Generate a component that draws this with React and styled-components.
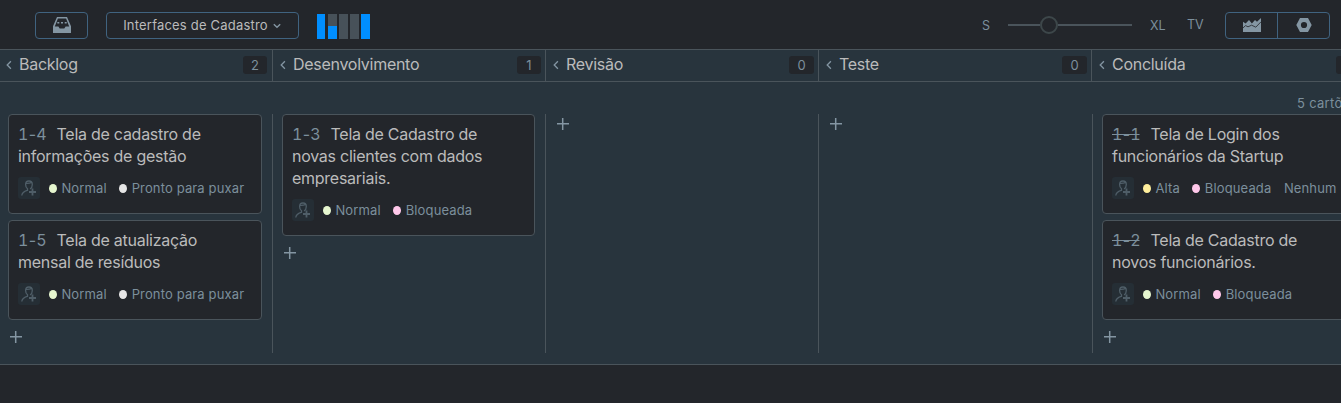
import React from 'react';
import styled, { createGlobalStyle } from 'styled-components';

const c = {
  dark: '#23262b', board: '#28343d', line: '#4a545b', blue: '#406380',
  text: '#bbbbbb', muted: '#7c8f9c', icon: '#8496a3', accent: '#008eff', idle: '#475159',
};

const Global = createGlobalStyle`
  * { box-sizing: border-box; }
  body { margin: 0; background: ${c.dark}; color: ${c.text}; font-family: Inter, "Liberation Sans", sans-serif; font-size: 13px; overflow: hidden; }
  svg { display: block; flex: none; }
`;

const Page = styled.main`
  width: 100vw; height: 100vh; overflow: hidden; background: ${c.dark};
`;
const Toolbar = styled.header`
  height: 49px; display: flex; align-items: flex-start; padding: 12px 11px 0 35px;
`;
const Button = styled.button`
  height: 27px; width: ${p => p.$w}px; display: flex; align-items: center; justify-content: center;
  gap: 5px; padding: 0 1px 0 0; background: none; border: 1px solid ${c.blue}; border-radius: 4px;
  color: ${c.text}; font: 13px/25px Inter, sans-serif; letter-spacing: .2px;
  margin-right: ${p => p.$gap || 0}px;
`;
const IconButton = styled(Button)`
  padding: 0 0 1px;
`;
const Group = styled.div`
  display: flex; width: 105px; height: 27px; border: 1px solid ${c.blue}; border-radius: 4px;
`;
const GroupButton = styled.div`
  width: ${p => p.$w}px; display: flex; align-items: center; justify-content: center; padding-bottom: 1px;
  & + & { border-left: 1px solid ${c.blue}; }
`;
const Chart = styled.div`
  display: flex; gap: 2px; height: 25px; margin-top: 2px; flex: 1;
`;
const Bar = styled.i`
  width: 9px; height: 25px;
  background: linear-gradient(${c.idle} ${p => p.$from}px, ${c.accent} ${p => p.$from}px);
  &:first-child { width: 8px; margin-right: 1px; }
`;
const Size = styled.span`
  width: ${p => p.$w}px; color: ${c.muted}; line-height: 16px; margin-top: ${p => p.$top || 6}px; font-size: 12.5px;
`;
const Slider = styled.div`
  width: 124px; height: 18px; margin: 4px 18px 0 0; display: flex; align-items: center;
  &::before { content: ''; width: 32px; height: 2px; background: ${c.line}; }
  &::after { content: ''; flex: 1; height: 2px; background: ${c.line}; }
`;
const Knob = styled.i`
  width: 18px; height: 18px; border: 2px solid #3d474a; border-radius: 50%;
`;
const Board = styled.section`
  height: 316px; background: ${c.board}; border: solid ${c.line}; border-width: 1px 0; overflow: hidden;
`;
const HeaderRow = styled.div`
  display: flex; width: 1365px; height: 32px; border-bottom: 1px solid ${c.line};
`;
const HeaderCell = styled.div`
  width: 273px; height: 31px; border-right: 1px solid ${c.line}; display: flex; align-items: center;
  padding: 0 4px 2px 7px;
  &:first-child { padding: 0 5px 2px 6px; }
`;
const HeaderTitle = styled.h2`
  margin: 0 0 1px 7px; flex: 1; font-weight: 400; font-size: 16px; line-height: 24px; letter-spacing: -.28px;
`;
const Count = styled.span`
  width: ${p => p.$w}px; height: 18px; border-radius: 3px; background: ${c.dark}; color: ${c.muted};
  text-align: center; line-height: 18px; font-size: 13px; margin-top: 1px;
`;
const Swimlane = styled.div`
  height: 32px; padding: 12px 0 0 1297px; color: ${c.muted}; white-space: nowrap; line-height: 18px; letter-spacing: .3px;
`;
const Columns = styled.div`
  display: flex; width: 1366px; height: 239px;
`;
const Column = styled.div`
  width: ${p => p.$w}px; border-right: 1px solid ${c.line}; padding: 0 10px 0 9px;
  display: flex; flex-direction: column; gap: 6px; align-items: flex-start;
  &:first-child { padding-left: 8px; }
`;
const CardBox = styled.article`
  width: 100%; background: ${c.dark}; border: 1px solid ${c.line}; border-radius: 4px; padding: 8px 9px 14px;
`;
const CardTitle = styled.h3`
  margin: 0; font-weight: 400; font-size: 16px; line-height: 22px; letter-spacing: -.26px;
`;
const CardId = styled.span`
  color: ${c.muted}; margin-right: 11px; font-feature-settings: 'tnum'; letter-spacing: -1.2px;
  text-decoration: ${p => (p.$done ? 'line-through' : 'none')};
`;
const Fields = styled.div`
  display: flex; align-items: center; height: 22px; margin-top: 10px; color: ${c.muted}; white-space: nowrap;
`;
const Avatar = styled.span`
  width: 22px; height: 22px; border-radius: 3px; background: #252e35; margin-right: 9px; flex: none;
`;
const Field = styled.span`
  display: flex; align-items: center; gap: 4.4px; margin-right: 12.5px; letter-spacing: .14px; line-height: 20px;
`;
const Dot = styled.i`
  width: 8px; height: 9px; border-radius: 50%; background: ${p => p.$color};
`;
const Add = styled.div`
  padding: ${p => (p.$first ? 4 : 5)}px 0 0 2px;
`;

const Chevron = () => (
  <svg width="6" height="10" viewBox="0 0 6 10" fill="none" stroke={c.icon} strokeWidth="1.3"><path d="M4.9 1.2 1.2 5l3.7 3.8" /></svg>
);
const Down = () => (
  <svg width="8" height="6" viewBox="0 0 8 6" fill="none" stroke={c.icon} strokeWidth="1.4"><path d="m.8 1.2 3.2 3 3.2-3" /></svg>
);
const Plus = () => (
  <svg width="12" height="12" viewBox="0 0 12 12" fill="none" stroke={c.icon} strokeWidth="1.5"><path d="M5.7 0v12M0 5.7h12" /></svg>
);
const Tray = () => (
  <svg width="18" height="16" viewBox="0 0 18 16" fill={c.icon}>
    <path fillRule="evenodd" d="M4 0h10l4 9.3V16H0V9.3zM4.9 1.4 1.8 9.6h3.6l1.3 1.9h4.6l1.3-1.9h3.6l-3.1-8.2z" />
    <path d="M4.3 5h2v1.6h-2zM8 5h2v1.6H8zM11.7 5h2v1.6h-2z" />
  </svg>
);
const Graph = () => (
  <svg width="18" height="14" viewBox="0 0 18 14">
    <path fill={c.icon} d="M0 14V3.8l2.6 1.7L6 2l2.9 3.4L12 2l2 1.8L18 0v14z" />
    <path fill="none" stroke={c.dark} strokeWidth=".8" d="M0 9.9 2.6 7.6 5 8.8l3.6-1.6 4.2 2L18 3.8" />
  </svg>
);
const Nut = () => (
  <svg width="16" height="14" viewBox="0 0 16 14"><path fill={c.icon} fillRule="evenodd" d="M4 0h8l3.7 7L12 14H4L.3 7zM8 3.9a3.1 3.1 0 1 0 0 6.2 3.1 3.1 0 0 0 0-6.2z" /></svg>
);
const AddUser = () => (
  <svg width="22" height="22" viewBox="0 0 22 22" fill="none" stroke="#4f5e68" strokeWidth="1.3">
    <path d="M7.6 7.6c0-2.4 1.2-3.6 3.3-3.6s3.4 1.3 3.4 3.5c0 2-1 3.8-2.2 4.5M7.6 7.4c0 1.9.7 3.4 1.9 4.3v1.6c-2.7.9-5.3 1.6-5.7 5.2M7.8 6.3c2.2.2 4.4-.2 6-.8" />
    <path strokeWidth="1.8" d="M14.5 11.5v7M11 15h7" />
  </svg>
);

const GREEN = '#e6f6cf', PINK = '#ffc8ea', GREY = '#e6e6e6', YELLOW = '#ffee9c';
const normal = ['Normal', GREEN], blocked = ['Bloqueada', PINK], ready = ['Pronto para puxar', GREY];

const columns = [
  { name: 'Backlog', count: 2, w: 273, cards: [
    { id: '1-4', title: 'Tela de cadastro de informações de gestão', fields: [normal, ready] },
    { id: '1-5', title: 'Tela de atualização mensal de resíduos', fields: [normal, ready] },
  ] },
  { name: 'Desenvolvimento', count: 1, w: 273, cards: [
    { id: '1-3', title: 'Tela de Cadastro de novas clientes com dados empresariais.', fields: [normal, blocked] },
  ] },
  { name: 'Revisão', count: 0, w: 273, cards: [] },
  { name: 'Teste', count: 0, w: 274, cards: [] },
  { name: 'Concluída', count: 2, w: 273, cards: [
    { id: '1-1', done: true, title: 'Tela de Login dos funcionários da Startup', fields: [['Alta', YELLOW], blocked, ['Nenhum']] },
    { id: '1-2', done: true, title: 'Tela de Cadastro de novos funcionários.', fields: [normal, blocked] },
  ] },
];

const Card = ({ id, done, title, fields }) => (
  <CardBox>
    <CardTitle><CardId $done={done}>{id}</CardId>{title}</CardTitle>
    <Fields>
      <Avatar><AddUser /></Avatar>
      {fields.map(([label, color]) => (
        <Field key={label}>{color && <Dot $color={color} />}{label}</Field>
      ))}
    </Fields>
  </CardBox>
);

export default function App() {
  return (
    <Page>
      <Global />
      <Toolbar>
        <IconButton $w={53} $gap={18}><Tray /></IconButton>
        <Button $w={193} $gap={18}>Interfaces de Cadastro<Down /></Button>
        <Chart>{[0, 12, 25, 25, 0].map((from, i) => <Bar key={i} $from={from} />)}</Chart>
        <Size $w={26}>S</Size>
        <Slider><Knob /></Slider>
        <Size $w={37}>XL</Size>
        <Size $w={38} $top={5}>TV</Size>
        <Group>
          <GroupButton $w={51}><Graph /></GroupButton>
          <GroupButton $w={52}><Nut /></GroupButton>
        </Group>
      </Toolbar>
      <Board>
        <HeaderRow>
          {columns.map(col => (
            <HeaderCell key={col.name}>
              <Chevron /><HeaderTitle>{col.name}</HeaderTitle><Count $w={col.count ? 24 : 25}>{col.count}</Count>
            </HeaderCell>
          ))}
        </HeaderRow>
        <Swimlane>5 cartões</Swimlane>
        <Columns>
          {columns.map(col => (
            <Column key={col.name} $w={col.w}>
              {col.cards.map(card => <Card key={card.id} {...card} />)}
              <Add $first={!col.cards.length}><Plus /></Add>
            </Column>
          ))}
        </Columns>
      </Board>
    </Page>
  );
}
